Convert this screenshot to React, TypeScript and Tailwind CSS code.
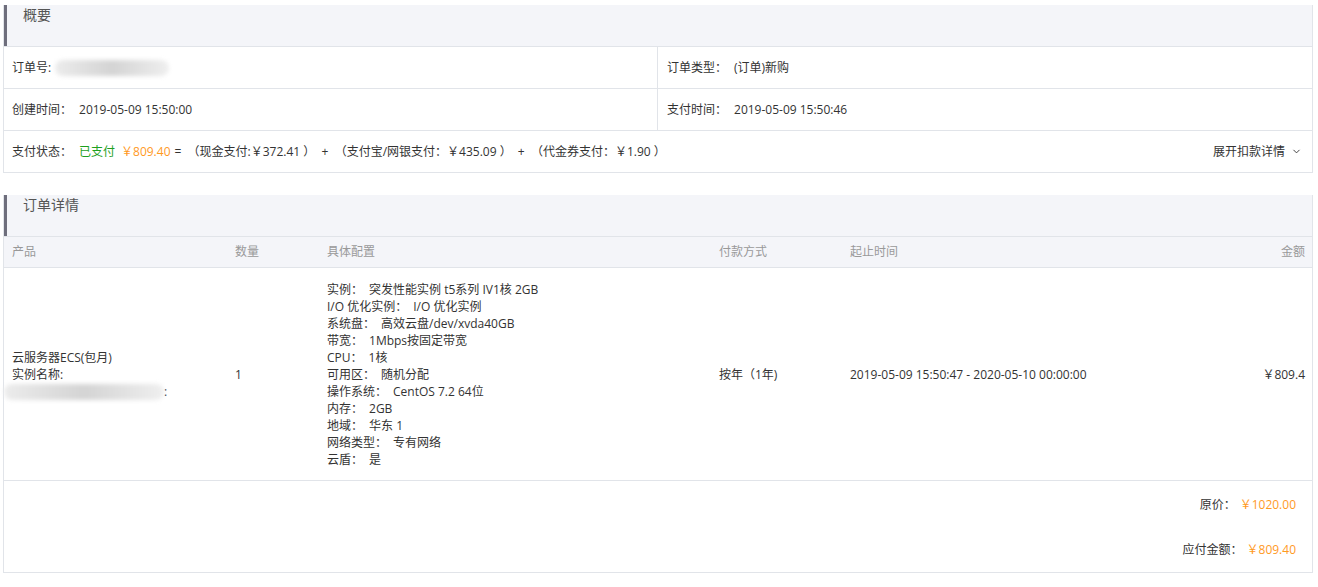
import { ChevronDown } from 'lucide-react';

const font = { fontFamily: '"Open Sans", "Noto Sans CJK SC", sans-serif' };

function PanelHeader({ title }: { title: string }) {
  return (
    <div className="h-[41px] bg-[#f4f5f9] border-l-[3px] border-[#6e6e7c] pl-[16px] pt-0">
      <span className="text-[14px] leading-[20px] text-[#555]">{title}</span>
    </div>
  );
}

function Blur({ w }: { w: number }) {
  return (
    <span className="inline-block h-[16px] align-middle relative" style={{ width: w }}>
      <span className="absolute inset-0 rounded-full bg-gradient-to-r from-[#ececec] via-[#d4d4d4] to-[#efefef] blur-[2px]" />
    </span>
  );
}

const configLines: [string, string][] = [
  ['实例', '突发性能实例 t5系列 IV1核 2GB'],
  ['I/O 优化实例', 'I/O 优化实例'],
  ['系统盘', '高效云盘/dev/xvda40GB'],
  ['带宽', '1Mbps按固定带宽'],
  ['CPU', '1核'],
  ['可用区', '随机分配'],
  ['操作系统', 'CentOS 7.2 64位'],
  ['内存', '2GB'],
  ['地域', '华东 1'],
  ['网络类型', '专有网络'],
  ['云盾', '是'],
];

export default function App() {
  return (
    <div className="bg-white w-[1318px] h-[587px] pl-[3px] pt-[5px] text-[12px] text-[#333]" style={font}>
      <div className="w-[1310px] border border-[#e1e4e9] border-t-0">
        <PanelHeader title="概要" />
        <div className="flex h-[42px] border-t border-[#e1e4e9]">
          <div className="w-[654px] border-r border-[#e1e4e9] flex items-center pl-[8px]">
            <span>订单号:</span>
            <span className="ml-[4px]"><Blur w={114} /></span>
          </div>
          <div className="flex-1 flex items-center pl-[9px]">
            <span>订单类型：</span>
            <span className="ml-[7px]">(订单)新购</span>
          </div>
        </div>
        <div className="flex h-[42px] border-t border-[#e1e4e9]">
          <div className="w-[654px] border-r border-[#e1e4e9] flex items-center pl-[8px]">
            <span>创建时间：</span>
            <span className="ml-[7px]">2019-05-09 15:50:00</span>
          </div>
          <div className="flex-1 flex items-center pl-[9px]">
            <span>支付时间：</span>
            <span className="ml-[7px]">2019-05-09 15:50:46</span>
          </div>
        </div>
        <div className="flex h-[42px] border-t border-[#e1e4e9] items-center pl-[8px] pr-[10px]">
          <span>支付状态：</span>
          <span className="ml-[7px] text-[#1ea01e]">已支付</span>
          <span className="ml-[6px] text-[#ff9a1f]">￥809.40</span>
          <span className="ml-[4px] whitespace-pre">=  （现金支付:￥372.41 ）  +  （支付宝/网银支付：￥435.09 ）  +  （代金券支付：￥1.90 ）</span>
          <span className="ml-auto flex items-center gap-[6px]">
            展开扣款详情
            <ChevronDown size={11} strokeWidth={2} className="text-[#333]" />
          </span>
        </div>
      </div>

      <div className="w-[1310px] mt-[22px] border border-[#e1e4e9] border-t-0">
        <PanelHeader title="订单详情" />
        <div className="grid grid-cols-[223px_92px_392px_131px_1fr_120px] h-[32px] items-center bg-[#f4f5f9] border-t border-b border-[#e1e4e9] text-[#999]">
          <span className="pl-[8px]">产品</span>
          <span className="pl-[8px]">数量</span>
          <span className="pl-[8px]">具体配置</span>
          <span className="pl-[8px]">付款方式</span>
          <span className="pl-[8px]">起止时间</span>
          <span className="pr-[7px] text-right">金额</span>
        </div>
        <div className="grid grid-cols-[223px_92px_392px_131px_1fr_120px] items-center pt-[13px] pb-[12px] leading-[17px] border-b border-[#e1e4e9]">
          <div className="pl-[8px]">
            <div>云服务器ECS(包月)</div>
            <div>实例名称:</div>
            <div className="flex items-center -ml-[8px]">
              <Blur w={160} />
              <span>:</span>
            </div>
          </div>
          <div className="pl-[8px]">1</div>
          <div className="pl-[8px]">
            {configLines.map(([k, v]) => (
              <div key={k}>
                {k}：<span className="ml-[6px]">{v}</span>
              </div>
            ))}
          </div>
          <div className="pl-[8px]">按年（1年)</div>
          <div className="pl-[8px]">2019-05-09 15:50:47 - 2020-05-10 00:00:00</div>
          <div className="pr-[7px] text-right">￥809.4</div>
        </div>
        <div className="h-[91px] flex flex-col items-end pr-[16px] pt-[15px] gap-[28px] leading-[17px]">
          <div>
            原价：<span className="ml-[4px] text-[#ff9a1f]">￥1020.00</span>
          </div>
          <div>
            应付金额：<span className="ml-[4px] text-[#ff9a1f]">￥809.40</span>
          </div>
        </div>
      </div>
    </div>
  );
}
